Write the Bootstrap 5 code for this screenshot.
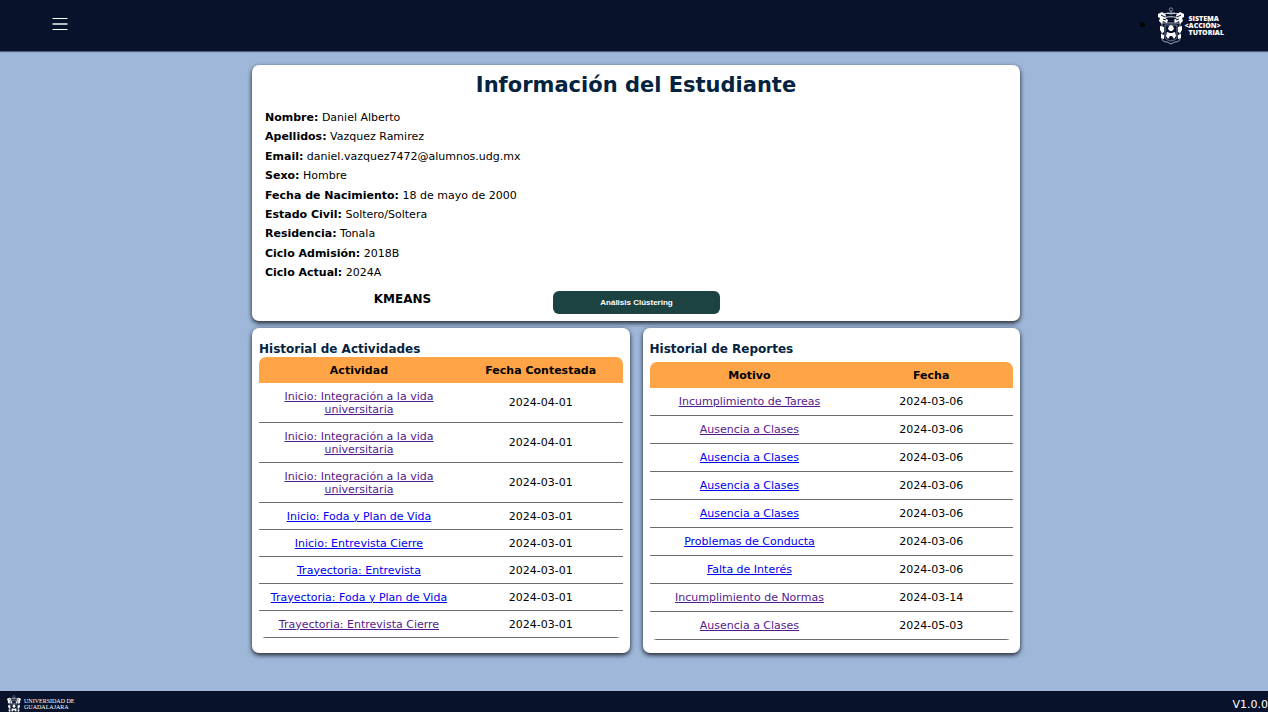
<!DOCTYPE html>
<html lang="es">
<head>
<meta charset="utf-8">
<meta name="viewport" content="width=device-width, initial-scale=1">
<title>Información del Estudiante</title>
<link href="https://cdn.jsdelivr.net/npm/bootstrap@5.3.0/dist/css/bootstrap.min.css" rel="stylesheet">
<style>
  body { background: #9fb8da; color: #000; font-family: Verdana, "DejaVu Sans", sans-serif; font-size: 11px; line-height: 13px; }
  .site-bar { background: #08132b; color: #fff; }
  .site-head { height: 51px; box-shadow: 0 1px 1px #4d5f7d; padding: 0 44px 0 48px; }
  .menu-btn { width: 24px; height: 24px; margin-bottom: 3px; }
  .brand-item { list-style: disc; color: #000; font-size: 16px; }
  .brand-name { font: 800 7px/7px "Open Sans", sans-serif; color: #fff; }
  .page-wrap { max-width: 772px; padding: 14px 0 38px 4px; }
  .panel { background: #fff; border-radius: 7px; box-shadow: 0 2px 5px rgba(0,0,0,.85); }
  .student { padding: 6px 0 7px; }
  .panel-title { font-size: 21px; line-height: 28px; font-weight: 700; color: #04233f; margin: 0 0 11px; }
  .panel-subtitle { font-size: 12px; line-height: 16px; font-weight: 700; color: #04233f; margin: 0; }
  .spaced { margin-bottom: 5px; }
  .student-data { height: 170px; padding: 0 13px; margin: 0 0 11px; line-height: 15px; }
  .student-data dt, .student-data dd { display: inline; margin: 0; line-height: 15px; }
  .method { font-size: 12px; line-height: 16px; font-weight: 700; width: 301px; }
  .cluster-btn { width: 167px; height: 23px; background: #1c4242; border-radius: 6px; color: #fff; font: 700 8px/10px "Liberation Sans", Arial, sans-serif; }
  .cluster-btn:hover { background: #285858; color: #fff; }
  .panels { gap: 13px; margin-top: 7px; }
  .history { padding: 13px 7px; min-height: 325px; }
  .history-table { width: 100%; table-layout: fixed; border-collapse: separate; border-spacing: 0; border-radius: 7px; overflow: hidden; text-align: center; }
  .history-table th { background: #ffa548; height: 26px; padding: 0; }
  .history-table th:first-child { width: 55%; }
  .history-table td { height: 28px; padding: 0 10px; border-bottom: 1px solid #6c6c6c; }
  .activities td { height: 27px; }
  .activities .tall td { height: 40px; }
  .history-table a { color: #00e; }
  .history-table a.seen { color: #551a8b; }
  .site-foot { height: 21px; padding-left: 6px; }
  .foot-name { font: 6px/6px "Liberation Serif", serif; padding-top: 3px; margin-left: 2px; }
  .version { line-height: 13px; padding-top: 7px; }
</style>
</head>
<body class="d-flex flex-column min-vh-100">
<svg width="0" height="0" class="position-absolute" aria-hidden="true">
  <symbol id="crest" viewBox="0 0 28 38">
    <g fill="none" stroke="#dfe3ea" stroke-width="1">
      <circle cx="14" cy="2.500" r="1.700" stroke="#7f899b"/><path d="M14 4v3M10 6h8" stroke="#9ba3b1"/>
      <path d="M3 9c3-3 7-3 11-2 4-1 8-1 11 2M4 12c6-3 14-3 20 0"/>
      <path d="M5 16v15c0 3 2 4 5 4l4 2 4-2c3 0 5-1 5-4V16z" stroke="#9ba3b1"/>
      <path d="M8 18v12c0 2 2 3 6 4 4-1 6-2 6-4V18z" stroke="#707b8e"/>
    </g>
    <path fill="#fff" d="M1 7l4-2 4 3-1 3 3 2-1 3-4-2-1 3-3-3 1-3-2-1zM27 7l-4-2-4 3 1 3-3 2 1 3 4-2 1 3 3-3-1-3 2-1zM3 19l4 1v5l-2 1-2-3zM25 19l-4 1v5l2 1 2-3zM4 27l3 1v4l-3-1zM24 27l-3 1v4l3-1zM14 18l2 1 1 3-2 2h-2l-2-2 1-3zM10 25l3 1h2l3-1 1 4-2 3-2-3h-2l-2 3-2-3z"/>
    <path stroke="#08132b" stroke-width="1" fill="none" d="M4 8l4 2M24 8l-4 2M6 12l3 1M22 12l-3 1"/>
  </symbol>
</svg>
<header class="site-bar site-head d-flex align-items-center justify-content-between">
  <button class="menu-btn btn p-0 border-0 d-flex align-items-center justify-content-center" type="button" aria-label="Abrir menú">
    <svg width="16" height="14" viewBox="0 0 16 14" fill="#fff"><path d="M.5 1h15v1H.5zM.5 12h15v1H.5z"/><path fill="#b5bdc6" d="M.5 6h15v2H.5z"/></svg>
  </button>
  <ul class="m-0 p-0">
    <li class="brand-item">
      <a href="#" class="d-inline-flex align-items-center text-decoration-none align-middle" aria-label="Sistema Acción Tutorial">
        <svg width="28" height="38" aria-hidden="true"><use href="#crest"/></svg>
        <span class="brand-name d-flex flex-column"><span class="ps-1">SISTEMA</span><span>&lt;ACCIÓN&gt;</span><span class="ps-1">TUTORIAL</span></span>
      </a>
    </li>
  </ul>
</header>

<main class="page-wrap w-100 mx-auto flex-grow-1">
  <section class="panel student">
    <h1 class="panel-title text-center">Información del Estudiante</h1>
    <dl class="student-data d-flex flex-column justify-content-between">
      <div><dt>Nombre:</dt> <dd>Daniel Alberto</dd></div>
      <div><dt>Apellidos:</dt> <dd>Vazquez Ramirez</dd></div>
      <div><dt>Email:</dt> <dd>daniel.vazquez7472@alumnos.udg.mx</dd></div>
      <div><dt>Sexo:</dt> <dd>Hombre</dd></div>
      <div><dt>Fecha de Nacimiento:</dt> <dd>18 de mayo de 2000</dd></div>
      <div><dt>Estado Civil:</dt> <dd>Soltero/Soltera</dd></div>
      <div><dt>Residencia:</dt> <dd>Tonala</dd></div>
      <div><dt>Ciclo Admisión:</dt> <dd>2018B</dd></div>
      <div><dt>Ciclo Actual:</dt> <dd>2024A</dd></div>
    </dl>
    <div class="d-flex">
      <h2 class="method text-center m-0">KMEANS</h2>
      <button class="cluster-btn btn border-0 p-0" type="button">Análisis Clústering</button>
    </div>
  </section>

  <div class="panels d-flex">
    <section class="panel history flex-fill w-50">
      <h2 class="panel-subtitle">Historial de Actividades</h2>
      <table class="history-table activities">
        <thead><tr><th scope="col">Actividad</th><th scope="col">Fecha Contestada</th></tr></thead>
        <tbody>
          <tr class="tall"><td><a class="seen" href="#">Inicio: Integración a la vida universitaria</a></td><td>2024-04-01</td></tr>
          <tr class="tall"><td><a class="seen" href="#">Inicio: Integración a la vida universitaria</a></td><td>2024-04-01</td></tr>
          <tr class="tall"><td><a class="seen" href="#">Inicio: Integración a la vida universitaria</a></td><td>2024-03-01</td></tr>
          <tr><td><a href="#">Inicio: Foda y Plan de Vida</a></td><td>2024-03-01</td></tr>
          <tr><td><a href="#">Inicio: Entrevista Cierre</a></td><td>2024-03-01</td></tr>
          <tr><td><a href="#">Trayectoria: Entrevista</a></td><td>2024-03-01</td></tr>
          <tr><td><a href="#">Trayectoria: Foda y Plan de Vida</a></td><td>2024-03-01</td></tr>
          <tr><td><a class="seen" href="#">Trayectoria: Entrevista Cierre</a></td><td>2024-03-01</td></tr>
        </tbody>
      </table>
    </section>
    <section class="panel history flex-fill w-50">
      <h2 class="panel-subtitle spaced">Historial de Reportes</h2>
      <table class="history-table">
        <thead><tr><th scope="col">Motivo</th><th scope="col">Fecha</th></tr></thead>
        <tbody>
          <tr><td><a class="seen" href="#">Incumplimiento de Tareas</a></td><td>2024-03-06</td></tr>
          <tr><td><a class="seen" href="#">Ausencia a Clases</a></td><td>2024-03-06</td></tr>
          <tr><td><a href="#">Ausencia a Clases</a></td><td>2024-03-06</td></tr>
          <tr><td><a href="#">Ausencia a Clases</a></td><td>2024-03-06</td></tr>
          <tr><td><a href="#">Ausencia a Clases</a></td><td>2024-03-06</td></tr>
          <tr><td><a href="#">Problemas de Conducta</a></td><td>2024-03-06</td></tr>
          <tr><td><a href="#">Falta de Interés</a></td><td>2024-03-06</td></tr>
          <tr><td><a class="seen" href="#">Incumplimiento de Normas</a></td><td>2024-03-14</td></tr>
          <tr><td><a class="seen" href="#">Ausencia a Clases</a></td><td>2024-05-03</td></tr>
        </tbody>
      </table>
    </section>
  </div>
</main>

<footer class="site-bar site-foot d-flex justify-content-between overflow-hidden">
  <div class="d-flex pt-1">
    <svg class="flex-shrink-0" width="16" height="20" viewBox="0 0 28 38" aria-hidden="true"><use href="#crest"/></svg>
    <span class="foot-name d-flex flex-column"><span>UNIVERSIDAD DE</span><span>GUADALAJARA</span></span>
  </div>
  <span class="version">V1.0.0</span>
</footer>
<script src="https://cdn.jsdelivr.net/npm/bootstrap@5.3.0/dist/js/bootstrap.bundle.min.js"></script>
</body>
</html>
